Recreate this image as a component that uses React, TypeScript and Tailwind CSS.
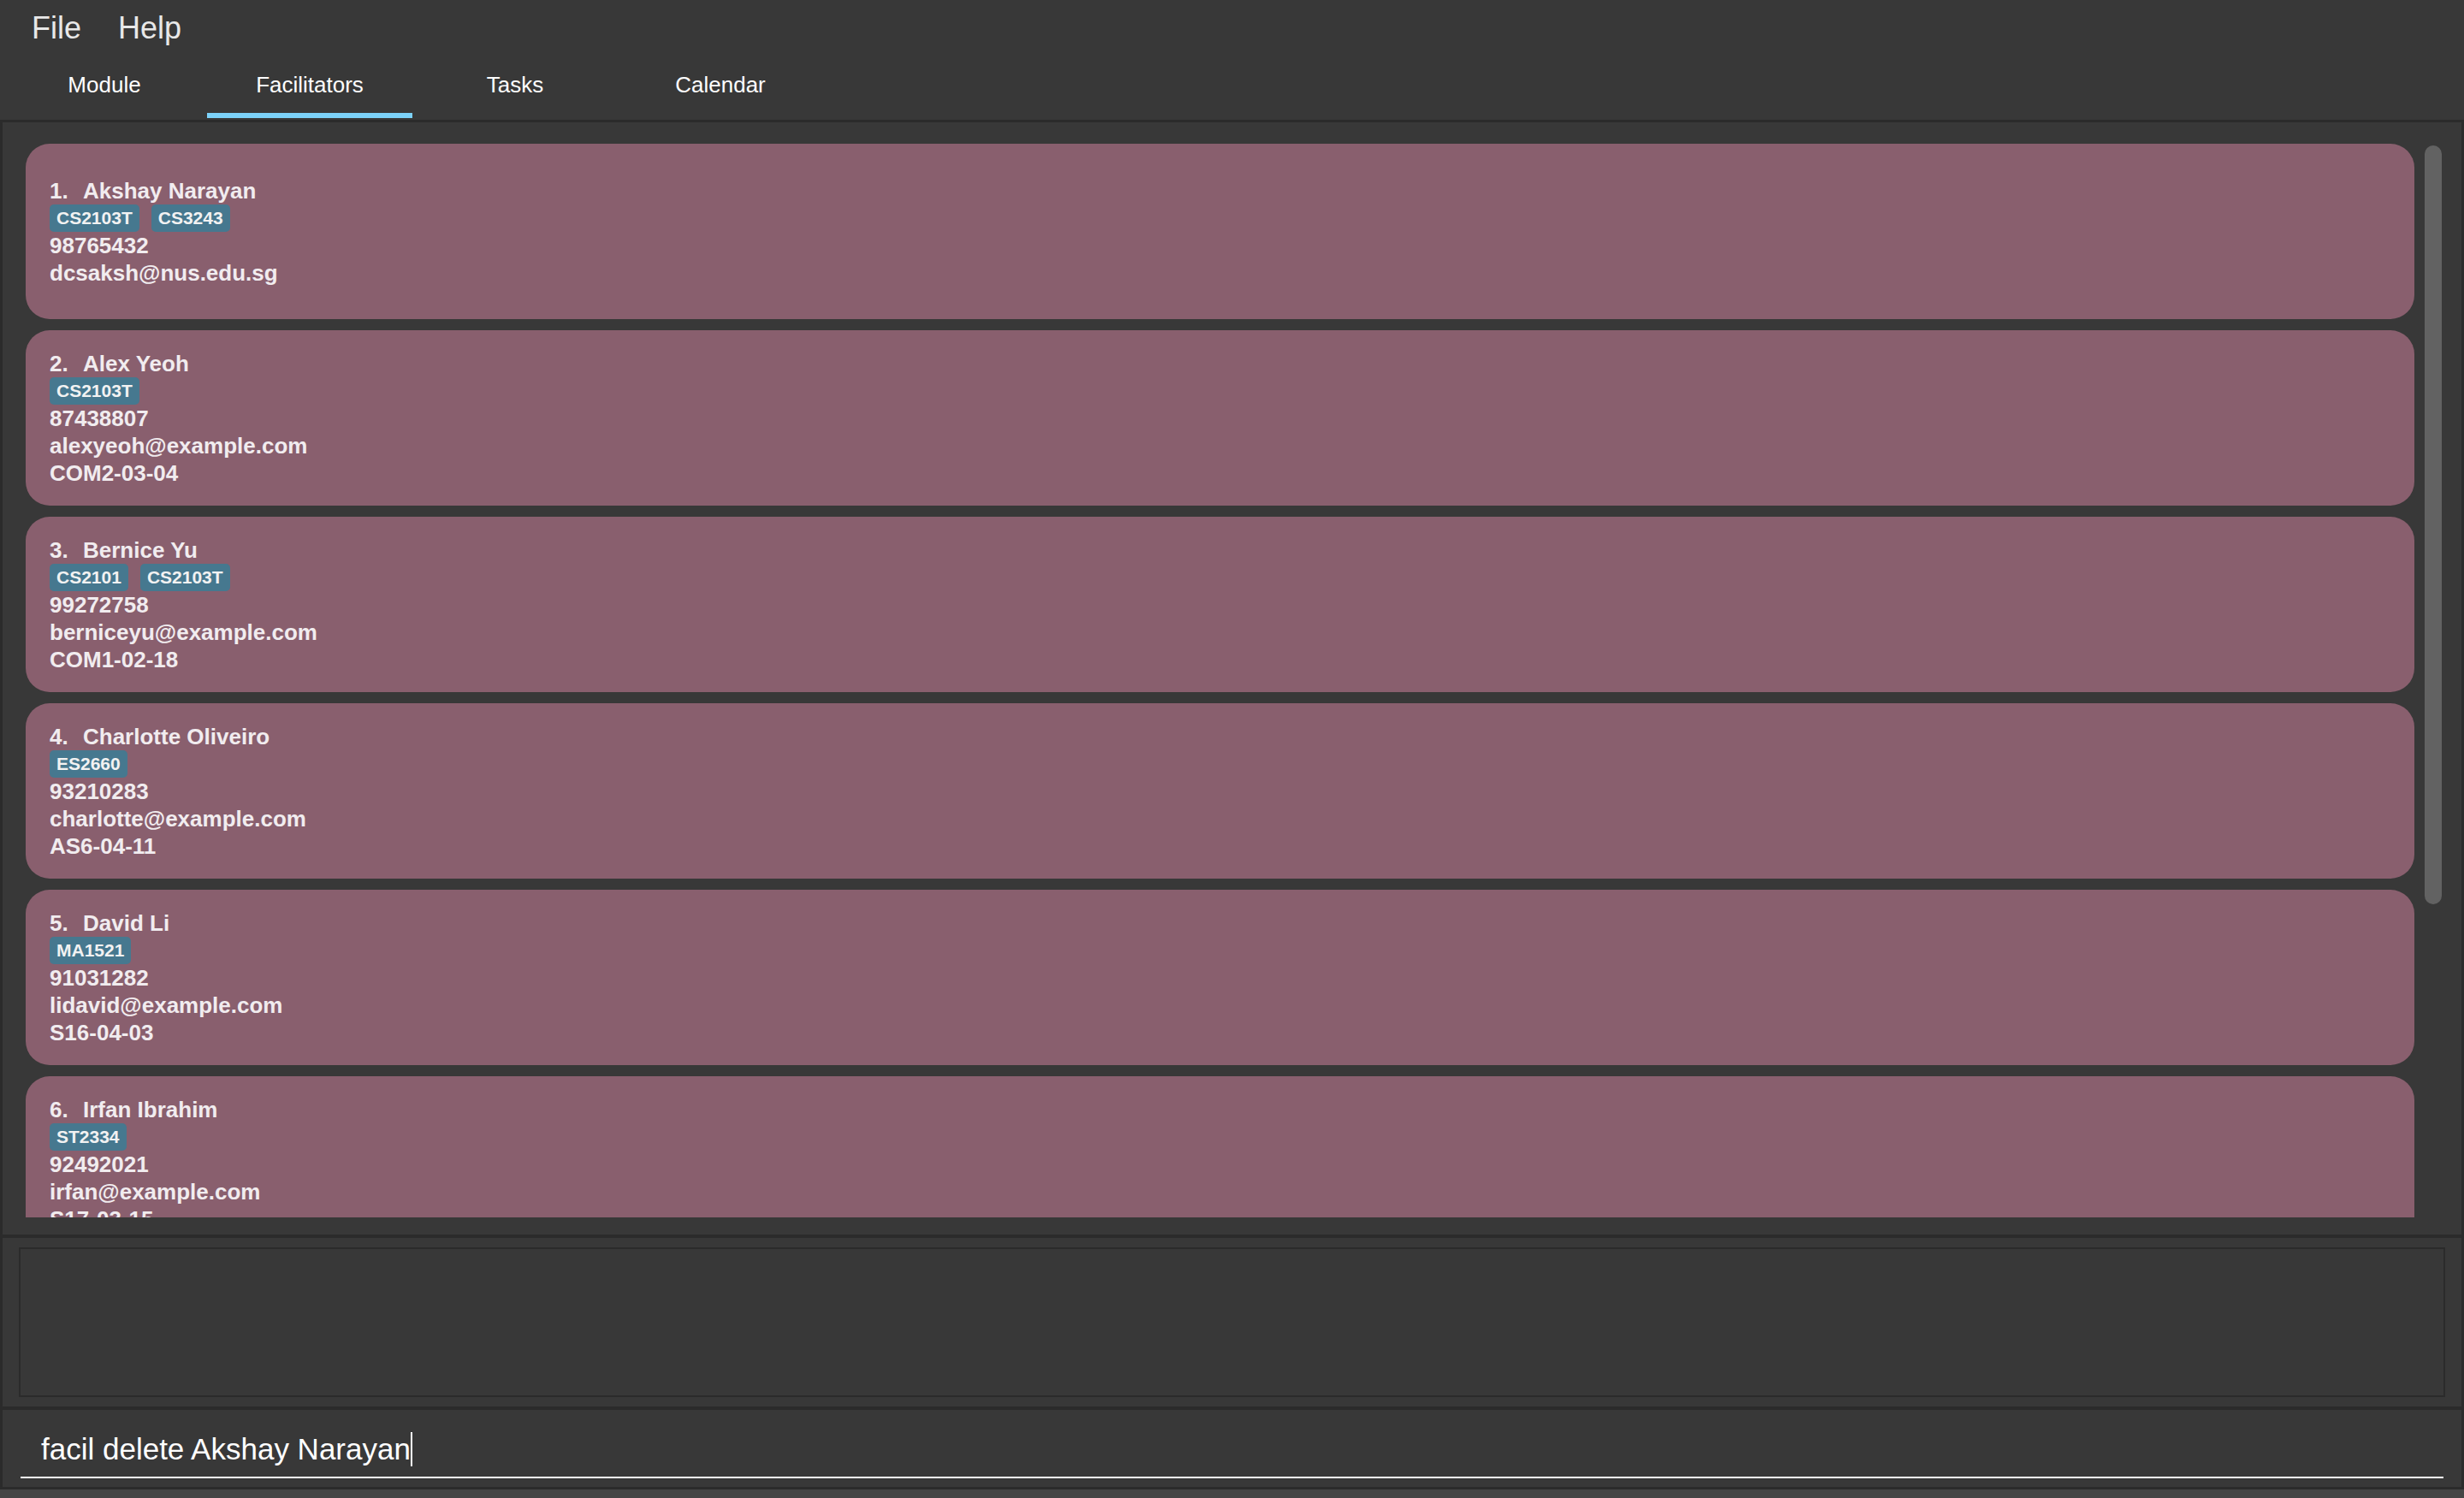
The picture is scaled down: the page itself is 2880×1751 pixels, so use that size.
import React from "react";

interface Facilitator {
  name: string;
  modules: string[];
  phone: string;
  email: string;
  office?: string;
}

const facilitators: Facilitator[] = [
  { name: "Akshay Narayan", modules: ["CS2103T", "CS3243"], phone: "98765432", email: "dcsaksh@nus.edu.sg" },
  { name: "Alex Yeoh", modules: ["CS2103T"], phone: "87438807", email: "alexyeoh@example.com", office: "COM2-03-04" },
  { name: "Bernice Yu", modules: ["CS2101", "CS2103T"], phone: "99272758", email: "berniceyu@example.com", office: "COM1-02-18" },
  { name: "Charlotte Oliveiro", modules: ["ES2660"], phone: "93210283", email: "charlotte@example.com", office: "AS6-04-11" },
  { name: "David Li", modules: ["MA1521"], phone: "91031282", email: "lidavid@example.com", office: "S16-04-03" },
  { name: "Irfan Ibrahim", modules: ["ST2334"], phone: "92492021", email: "irfan@example.com", office: "S17-03-15" },
  { name: "Roy Balakrishnan", modules: ["CS2100"], phone: "92624417", email: "royb@example.com", office: "COM1-01-11" },
];

const tabs = ["Module", "Facilitators", "Tasks", "Calendar"];

const FacilitatorCard = ({ f, index }: { f: Facilitator; index: number }) => (
  <div className="h-[205px] shrink-0 rounded-[28px] bg-[#895f6e] px-[28px] flex flex-col justify-center text-[26px] leading-[32px] font-bold text-[#f1ecef]">
    <div className="flex">
      <span className="w-[39px]">{index}.</span>
      <span>{f.name}</span>
    </div>
    <div className="flex gap-[14px] h-[32px] items-start">
      {f.modules.map((m) => (
        <span
          key={m}
          className="h-[32px] px-[8px] rounded-[5px] bg-[#46788f] text-[21px] leading-[32px] text-[#f2f2f2]"
        >
          {m}
        </span>
      ))}
    </div>
    <div>{f.phone}</div>
    <div>{f.email}</div>
    {f.office && <div>{f.office}</div>}
  </div>
);

export default function App() {
  return (
    <div
      className="w-[2880px] h-[1751px] bg-[#383838] flex flex-col overflow-hidden"
      style={{ fontFamily: '"Liberation Sans", Arial, sans-serif' }}
    >
      {/* Menu bar */}
      <div className="h-[66px] shrink-0 flex items-center pl-[37px] gap-[43px] text-[36px] text-[#e8e8e8]">
        <span>File</span>
        <span>Help</span>
      </div>

      {/* Tab headers */}
      <div className="h-[74px] shrink-0 flex pl-[2px]">
        {tabs.map((t) => (
          <div key={t} className="relative w-[240px] h-full">
            <div className="h-[66px] flex items-center justify-center text-[26px] leading-[26px] text-white">
              {t}
            </div>
            {t === "Facilitators" && (
              <div className="absolute left-0 right-0 bottom-[2px] h-[6px] bg-[#7cd2f9]" />
            )}
          </div>
        ))}
      </div>

      {/* Facilitator list */}
      <div className="h-[1307px] shrink-0 border-[#2b2b2b] border-t-[3px] border-x-[3px] border-b-[4px] flex items-start">
        <div className="flex-1 h-[1280px] overflow-hidden pt-[25px] pl-[27px] pr-[12px] flex flex-col gap-[13px]">
          {facilitators.map((f, i) => (
            <FacilitatorCard key={f.name} f={f} index={i + 1} />
          ))}
        </div>
        <div className="w-[20px] mr-[23px] pt-[27px]">
          <div className="h-[887px] rounded-[10px] bg-[#626262]" />
        </div>
      </div>

      {/* Result display */}
      <div className="h-[201px] shrink-0 border-[#2b2b2b] border-x-[3px] border-b-[4px] px-[19px] pt-[11px]">
        <div className="h-[175px] border-2 border-[#2b2b2b] bg-[#383838]" />
      </div>

      {/* Command box */}
      <div className="h-[93px] shrink-0 border-[#2b2b2b] border-x-[3px] border-b-[3px] px-[21px] pt-[28px]">
        <div className="h-[52px] border-b-2 border-white pl-[24px] flex items-start">
          <span className="text-[35px] leading-[35px] text-white whitespace-nowrap">facil delete Akshay Narayan</span>
          <span className="w-[2px] h-[40px] -mt-[2px] bg-white" />
        </div>
      </div>

      <div className="flex-1 bg-[#454545]" />
    </div>
  );
}
